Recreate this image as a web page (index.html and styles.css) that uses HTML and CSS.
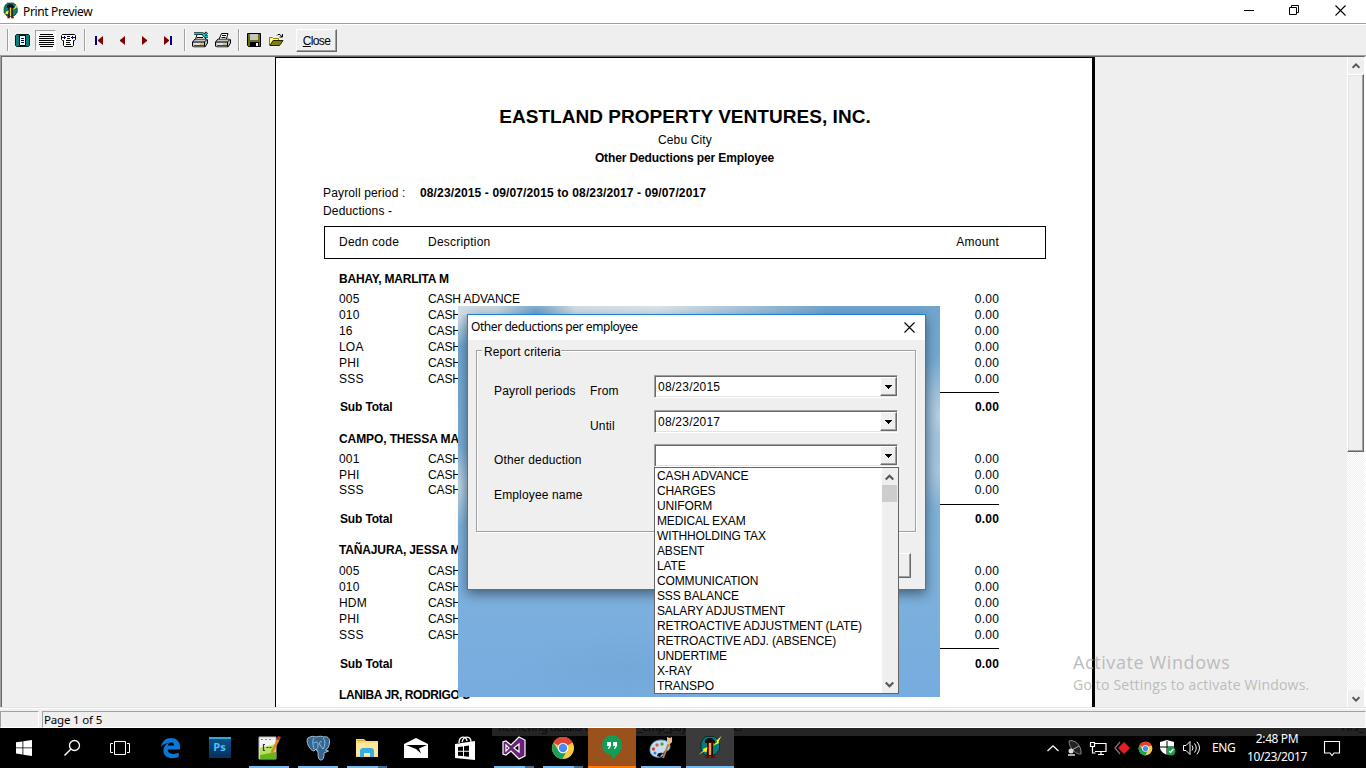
FILE: index.html
```html
<!DOCTYPE html>
<html lang="en">
<head>
<meta charset="utf-8">
<title>Print Preview</title>
<link rel="stylesheet" href="styles.css">
</head>
<body>
<svg width="0" height="0" class="defs">
  <defs>
    <symbol id="app" viewBox="0 0 24 24">
      <path d="M8 1.500h8l4 3 1.500 4v6l-3 4-3 1.500H7l-4-5V8l2-4z" fill="#087c7c" stroke="#032f2f" stroke-width="1"/>
      <path d="M7 5l3-2h4l3 3v2h-3V7h-4v1H7z" fill="#111"/>
      <path d="M9.500 7h5v13h-5z" fill="#8c1414" stroke="#2a0000" stroke-width="1"/>
      <path d="M11.200 8h1.600v12h-1.600z" fill="#e8d848"/>
      <path d="M8 20h3v3H7.500zM13 20h3l1 3h-4z" fill="#700"/>
      <path d="M23.500 1l-5 4.500.5 1.500-4.500 4 6.500-3-.5-1.500zM.5 20l5-4.500-.5-1.500 4.500-2-1 5-2.500-.5z" fill="#ff0"/>
    </symbol>
    <symbol id="chrome" viewBox="0 0 24 24">
      <circle cx="12" cy="12" r="11" fill="#fbcd3c"/>
      <path d="M12 12L2.500 6.500A11 11 0 0 1 21.500 6.500z" fill="#e04434"/>
      <path d="M12 12V7H21.800A11 11 0 0 0 2.500 6.500z" fill="#e04434"/>
      <path d="M2.500 6.500A11 11 0 0 0 11.500 23L16 14.500 12 12 7.500 14.500z" fill="#1ba15e"/>
      <circle cx="12" cy="12" r="5.300" fill="#fff"/><circle cx="12" cy="12" r="4.200" fill="#4c8bf5"/>
    </symbol>
    <symbol id="down" viewBox="0 0 7 4"><path d="M0 0h7v1H6v1H5v1H4v1H3V3H2V2H1V1H0z" fill="#000"/></symbol>
    <symbol id="chev" viewBox="0 0 8 6"><path d="M.6 4.800L4 1.400 7.400 4.800" fill="none" stroke="#555" stroke-width="1.900"/></symbol>
    <symbol id="close" viewBox="0 0 11 11"><path d="M.5.5l10 10M10.500.5l-10 10" fill="none" stroke="#000" stroke-width="1.100"/></symbol>
    <symbol id="printer-base" viewBox="0 0 16 9">
      <path d="M.5 3.500L3 .5h11.500l1 1v3L13 8.500H1.500l-1-1z" fill="#c4c4c4" stroke="#000"/>
      <path d="M1 3.500h11.500L15 1M12.500 3.500V8" fill="none" stroke="#000"/>
      <path d="M2 5.500h6" stroke="#fff"/><path d="M8 5.500h3" stroke="#d8d000"/><path d="M2 7h10" stroke="#444"/>
    </symbol>
  </defs>
</svg>

<div class="titlebar">
  <svg class="app-icon" width="17" height="17"><use href="#app"/></svg>
  <span class="window-title">Print Preview</span>
  <div class="window-buttons">
    <svg width="11" height="11"><path d="M0 5.500h10" stroke="#000"/></svg>
    <svg width="11" height="11"><path d="M.5 2.500h7v7h-7zM2.500 2.500v-2h7v7h-2" fill="none" stroke="#000"/></svg>
    <svg width="11" height="11"><use href="#close"/></svg>
  </div>
</div>

<div class="toolbar">
  <div class="tool-group pages">
    <svg width="15" height="13"><path d="M1.500 .5h12l1 1v10l-1 1h-12l-1-1v-10z" fill="#087f7f" stroke="#022"/><path d="M4.500 1.500h6v10h-6z" fill="#fff" stroke="#000"/><path d="M6 4.500h3M6 6.500h3M6 8.500h3" stroke="#000080"/></svg>
    <span class="pressed"><svg width="15" height="13"><path d="M1 .5h13M0 2.500h15M0 4.500h15M0 6.500h15M0 8.500h15M0 10.500h15M1 12.500h13" stroke="#000"/></svg></span>
    <svg width="15" height="13"><path d="M1.500 .5h12l1 1v4l-1 1h-1v5l-1 1h-8l-1-1v-5h-1l-1-1v-4z" fill="#fff" stroke="#000"/><path d="M6 2.500h3M6 4.500h3M5 6.500h5M5 8.500h4M5 10.500h5" stroke="#000"/><path d="M1 3.500h4M3.500 2v3M10 3.500h4M11.500 2v3" stroke="#000080"/></svg>
  </div>
  <div class="tool-group nav">
    <svg width="9" height="9"><path d="M0 0h2v9H0z" fill="#000080"/><path d="M8 0v9L3 5V4z" fill="#800000"/></svg>
    <svg width="6" height="9"><path d="M5 0v9L0 5V4z" fill="#800000"/></svg>
    <svg width="6" height="9"><path d="M0 0v9L5 5V4z" fill="#800000"/></svg>
    <svg width="9" height="9"><path d="M6 0h2v9H6z" fill="#000080"/><path d="M0 0v9L5 5V4z" fill="#800000"/></svg>
  </div>
  <div class="tool-group print">
    <svg width="17" height="16"><path d="M3.500 7.500l1.500-5h7l2 5z" fill="#fff" stroke="#000"/><path d="M5 5.500h6" stroke="#000"/><use href="#printer-base" y="6.500" width="16" height="9"/><path d="M2 1.500h8l3 1 2-2M11 2.500l2 2h3" fill="none" stroke="#000" stroke-width="2.600"/><path d="M2 1.500h8l3 1 2-1.500M11 2.500l2 2h3" fill="none" stroke="#12c8d0" stroke-width="1.300"/></svg>
    <svg width="17" height="15"><path d="M3.500 7.500l3-7h6.500l-2 7z" fill="#fff" stroke="#000"/><path d="M7 2.500h4M6.500 4.500h4" stroke="#000"/><use href="#printer-base" y="5.500" width="16" height="9"/></svg>
  </div>
  <div class="tool-group file">
    <svg width="14" height="14"><path d="M.5 .5h13v13h-12l-1-1z" fill="#6b6b14" stroke="#000"/><path d="M3 1h8v6H3z" fill="#c4c4c4"/><path d="M3 9h9v5H3z" fill="#000"/><path d="M9 10h2v3H9z" fill="#fff"/></svg>
    <svg width="15" height="14"><path d="M.5 12.500v-8h3l1 1h5v3" fill="#ffff80" stroke="#808000"/><path d="M1 12.500l3-5h10l-3.500 5z" fill="#808000" stroke="#222000"/><path d="M8 2.500l1-1h2l2 2.500M13.500 1v3h-3" fill="none" stroke="#000"/></svg>
  </div>
  <button class="close-button"><u>C</u>lose</button>
</div>

<main class="view">
  <div class="canvas">
    <article class="sheet">
      <h1>EASTLAND PROPERTY VENTURES, INC.</h1>
      <p class="city">Cebu City</p>
      <h2>Other Deductions per Employee</h2>
      <p class="criteria"><span class="criteria-label">Payroll period :</span><b>08/23/2015 - 09/07/2015 to 08/23/2017 - 09/07/2017</b></p>
      <p class="criteria"><span class="criteria-label">Deductions -</span></p>
      <div class="columns"><span>Dedn code</span><span>Description</span><span class="amount">Amount</span></div>

      <section class="group first">
        <h3>BAHAY, MARLITA M</h3>
        <div class="row"><span>005</span><span>CASH ADVANCE</span><span class="amount">0.00</span></div>
        <div class="row"><span>010</span><span>CASH</span><span class="amount">0.00</span></div>
        <div class="row"><span>16</span><span>CASH</span><span class="amount">0.00</span></div>
        <div class="row"><span>LOA</span><span>CASH</span><span class="amount">0.00</span></div>
        <div class="row"><span>PHI</span><span>CASH</span><span class="amount">0.00</span></div>
        <div class="row"><span>SSS</span><span>CASH</span><span class="amount">0.00</span></div>
        <div class="subtotal"><span>Sub Total</span><span class="total">0.00</span></div>
      </section>
      <section class="group second">
        <h3>CAMPO, THESSA MAR</h3>
        <div class="row"><span>001</span><span>CASH</span><span class="amount">0.00</span></div>
        <div class="row"><span>PHI</span><span>CASH</span><span class="amount">0.00</span></div>
        <div class="row last"><span>SSS</span><span>CASH</span><span class="amount">0.00</span></div>
        <div class="subtotal"><span>Sub Total</span><span class="total">0.00</span></div>
      </section>
      <section class="group third">
        <h3>TAÑAJURA, JESSA M</h3>
        <div class="row"><span>005</span><span>CASH</span><span class="amount">0.00</span></div>
        <div class="row"><span>010</span><span>CASH</span><span class="amount">0.00</span></div>
        <div class="row"><span>HDM</span><span>CASH</span><span class="amount">0.00</span></div>
        <div class="row"><span>PHI</span><span>CASH</span><span class="amount">0.00</span></div>
        <div class="row"><span>SSS</span><span>CASH</span><span class="amount">0.00</span></div>
        <div class="subtotal"><span>Sub Total</span><span class="total">0.00</span></div>
      </section>
      <section class="group fourth"><h3>LANIBA JR, RODRIGO S</h3></section>
    </article>
  </div>
  <div class="scrollbar">
    <div class="scroll-end"><svg width="8" height="6"><use href="#chev"/></svg></div>
    <div class="scroll-thumb"></div>
    <div class="scroll-track"></div>
    <div class="scroll-end"><svg class="flip" width="8" height="6"><use href="#chev"/></svg></div>
  </div>
</main>

<div class="statusbar"><div class="status-cell"></div><div class="status-cell page-count">Page 1 of 5</div></div>

<footer class="taskbar">
  <div class="band"><span class="band-text">Retrieving details on table hr_emp_payroll... Done!</span><span class="band-end">Hrs_</span></div>
  <div class="slot start"><svg width="16" height="16"><path d="M0 2.300l6.500-.9v6H0zM7.300 1.300L16 0v7.400H7.300zM0 8.200h6.500v6.200L0 13.500zM7.300 8.200H16V16l-8.700-1.300z" fill="#fff"/></svg></div>
  <div class="slot start"><svg width="18" height="18"><circle cx="11.500" cy="6.500" r="5" fill="none" stroke="#fff" stroke-width="1.300"/><path d="M8 10L1.500 16.500" stroke="#fff" stroke-width="1.500"/></svg></div>
  <div class="slot start"><svg width="20" height="16"><path d="M4.500 1.500h11v13h-11zM3 3.500H.5v9H3M17 3.500h2.500v9H17" fill="none" stroke="#fff"/></svg></div>
  <div class="slot gap-before"><svg width="21" height="22" viewBox="0 0 22 22"><path d="M1 10C2 4 6 .5 11.500.5 17 .5 21 4 21 10v2.500H8c.2 3.200 2.800 4.700 6 4.700 2.200 0 4-.5 5.600-1.400v4.400c-2 1-4.200 1.500-7 1.500-5.500 0-9-3.200-9-8 0-3.500 2-6.500 5.500-8C5 6.200 2.600 7.500 1 10zm7.200-1.500h6.600c0-2-1-3.300-3.200-3.300-1.900 0-3.100 1.300-3.400 3.300z" fill="#0a78d7"/></svg></div>
  <div class="slot"><div class="ps">Ps</div></div>
  <div class="slot open"><svg width="24" height="24"><path d="M2 1h17v22H2z" fill="#f2f2f2" stroke="#bbb"/><path d="M3 12l16-3v14H3z" fill="#62b51e"/><path d="M3 12l16-4v8L3 19z" fill="#b8e05a"/><path d="M4 3.500h2M8 3.500h2M12 3.500h2" stroke="#888"/><path d="M8 8.500H6.500v6H8M9.500 11.500h2M12.500 11.500h2" fill="none" stroke="#333" stroke-width="1.200"/><path d="M13.500 19l.5-4L20 3l2.500 1-6 12z" fill="#dc8c1e"/><path d="M20 3l1-3 3 1-1.500 3z" fill="#c33"/></svg></div>
  <div class="slot open"><svg width="24" height="24"><path d="M2 2c3-2 6-2 8-1 3-1 6-1 8 0 3-1 6 1 5.500 5 0 4-2 7-4 8l3 1-4.500 2c0 4-.5 7-3 7s-3-3-3-8l-2-3-2 2C4 15-1 5 2 2z" fill="#336791" stroke="#a9c2d8" stroke-width="1"/><path d="M8 2c-2 3-1 7 0 11M17 2c3 3 2 8 0 11M8 7c3-2 4-1 4 2 0 4-2 3-1 6M16 6c-2-1-3 0-2 3l3 4" fill="none" stroke="#a9c2d8" stroke-width=".9"/></svg></div>
  <div class="slot open stacked"><svg width="22" height="20"><path d="M0 1h8l2 2h12v16H0z" fill="#fbd978"/><path d="M1 2h7l1 1H1z" fill="#d8a23a"/><path d="M0 5h22v13H0z" fill="#ffe79c"/><path d="M4 19v-7l2-2h10l2 2v7h-4v-4H8v4z" fill="#35aee6"/></svg></div>
  <div class="slot"><svg width="24" height="20"><path d="M0 6L12 0l12 6v14H0z" fill="#fff"/><path d="M2 7h21l-8 3.500 2 5-5-4.500z" fill="#000"/></svg></div>
  <div class="slot"><svg width="22" height="24"><path d="M1 8l20-3v19L1 22z" fill="#fff"/><path d="M5 7C5 0 12-1 13 5M8 6c2-7 9-6 9 0" fill="none" stroke="#fff" stroke-width="1.300"/><path d="M4 11l5-.6v4.400H4zM10 10.200l5-.7v5.300h-5zM4 15.700h5v4.300l-5-.3zM10 15.700h5v5l-5-.5z" fill="#000"/></svg></div>
  <div class="slot open stacked"><svg width="24" height="24"><path d="M17 1l6 3v16l-6 3-8-8-5 4-3-1V6l3-1 5 4zM17 8l-5 4 5 4zM4 9v6l3-3z" fill="#68217a" fill-rule="evenodd" stroke="#fff" stroke-width="1.200"/></svg></div>
  <div class="slot open stacked"><svg width="24" height="24"><use href="#chrome"/></svg></div>
  <div class="slot alert"><svg width="22" height="24"><path d="M11 0a10 10 0 0 1 10 10c0 6-5 11-10 14v-4A10 10 0 0 1 11 0z" fill="#0f9d58"/><path d="M6 7h4v4l-2 3H7l1-3H6zM12 7h4v4l-2 3h-1l1-3h-2z" fill="#fff"/></svg></div>
  <div class="slot open"><svg width="24" height="24"><path d="M1 14C1 8 6 4 12 4s9 3 9 7c0 3-3 4-5 4-3 1-1 6-5 6-5 1-10-2-10-7z" fill="#c5dff0" stroke="#6d9cc2"/><path d="M8 20c0-3 3-4 6-3l-3 4z" fill="#08141c"/><circle cx="4.500" cy="13" r="1.700" fill="#d44332"/><circle cx="8" cy="9" r="1.700" fill="#de5943"/><circle cx="13" cy="8" r="1.700" fill="#52a043"/><circle cx="6" cy="17" r="1.500" fill="#4277c3"/><path d="M14 22l6-15" stroke="#c77824" stroke-width="2"/><path d="M18 7l0-6 3 1 2-1 0 5-3 3z" fill="#e9bd8a"/></svg></div>
  <div class="slot current"><svg width="24" height="24"><use href="#app"/></svg></div>
  <div class="tray">
    <svg width="12" height="7"><path d="M.5 6L6 .8 11.500 6" fill="none" stroke="#fff" stroke-width="1.300"/></svg>
    <svg width="17" height="17"><path d="M3 1c5-2 13 4 12 13-4 1-12-5-12-13z" fill="#222" stroke="#888"/><path d="M6 10l7-4" stroke="#aaa"/><circle cx="5" cy="11" r="2.500" fill="#ddd"/><path d="M2 15h7" stroke="#aaa" stroke-width="2"/></svg>
    <svg width="17" height="15"><path d="M5 2.500h11v8H5M8 13.500h6M11 11v2M2.500 6v6h3M.5 1.500h4v4h-4z" fill="none" stroke="#fff" stroke-width="1.200"/></svg>
    <svg width="17" height="14"><path d="M6 1L1 7l5 6" fill="none" stroke="#777" stroke-width="1.300"/><path d="M10 1l6 6-6 6-6-6z" fill="#e51e25"/></svg>
    <svg width="15" height="15"><use href="#chrome"/></svg>
    <svg width="16" height="16"><path d="M7 0l7 2v5c0 4-3 6-7 8-4-2-7-4-7-8V2z" fill="#fff"/><path d="M7 1v14M0 7h14" stroke="#000"/><circle cx="11" cy="11" r="4.500" fill="#1c9b4b"/><path d="M9 11l1.500 1.500L13.500 9" fill="none" stroke="#fff" stroke-width="1.200"/></svg>
    <svg width="17" height="14"><path d="M.5 4.500H3l4-4v13l-4-4H.5zM9 4.500q2 2.500 0 5M11.500 2.500q3.500 4.500 0 9M14 .8q5 6 0 12.500" fill="none" stroke="#fff"/></svg>
    <span class="lang">ENG</span>
    <span class="clock"><span>2:48 PM</span><span>10/23/2017</span></span>
    <svg width="16" height="17"><path d="M.5 1.500h15v11.500H10L8 15.500 6 13H.5z" fill="none" stroke="#fff" stroke-width="1.100"/></svg>
  </div>
</footer>

<div class="backdrop">
  <div class="dialog">
    <div class="dialog-title"><span class="dialog-name">Other deductions per employee</span><svg width="11" height="11"><use href="#close"/></svg></div>
    <div class="dialog-body">
      <div class="criteria-box">
        <span class="legend">Report criteria</span>
        <div class="form">
          <label>Payroll periods</label><label>From</label><div class="combo"><span>08/23/2015</span><i><svg width="7" height="4"><use href="#down"/></svg></i></div>
          <label></label><label>Until</label><div class="combo"><span>08/23/2017</span><i><svg width="7" height="4"><use href="#down"/></svg></i></div>
          <label class="wide">Other deduction</label><div class="combo"><span></span><i><svg width="7" height="4"><use href="#down"/></svg></i></div>
          <label class="wide">Employee name</label>
        </div>
      </div>
      <div class="dialog-button"></div>
    </div>
  </div>
  <div class="dropdown">
    <ul>
      <li>CASH ADVANCE</li><li>CHARGES</li><li>UNIFORM</li><li>MEDICAL EXAM</li><li>WITHHOLDING TAX</li><li>ABSENT</li><li>LATE</li><li>COMMUNICATION</li><li>SSS BALANCE</li><li>SALARY ADJUSTMENT</li><li>RETROACTIVE ADJUSTMENT (LATE)</li><li>RETROACTIVE ADJ. (ABSENCE)</li><li>UNDERTIME</li><li>X-RAY</li><li>TRANSPO</li>
    </ul>
    <div class="list-scroll"><svg width="9" height="7"><use href="#chev"/></svg><div class="list-thumb"></div><svg class="flip list-down" width="9" height="7"><use href="#chev"/></svg></div>
  </div>
</div>

<div class="watermark"><p class="wm-title">Activate Windows</p><p class="wm-text">Go to Settings to activate Windows.</p></div>
</body>
</html>
```
FILE: styles.css
```css
* { box-sizing: border-box; }
body { margin: 0; width: 1366px; height: 768px; overflow: hidden; position: relative; display: flex; flex-direction: column; background: #efefef; color: #000; font: 12px/16px "Liberation Sans", Arial, sans-serif; }
h1, h2, h3, p, ul { margin: 0; padding: 0; }
svg { display: block; flex: none; overflow: visible; }
.defs { position: absolute; }
.flip { transform: rotate(180deg); }

.titlebar { height: 24px; flex: none; background: #fff; border-bottom: 1px solid #a0a0a0; display: flex; align-items: center; padding: 0 20px 2px 2px; }
.window-title { margin-left: 4px; padding-top: 2px; font: 12px/16px "Noto Sans", sans-serif; letter-spacing: -.35px; }
.window-buttons { margin-left: auto; display: flex; gap: 35px; }
.window-buttons svg:first-child { margin-right: -1px; }

.toolbar { height: 31px; flex: none; border-top: 1px solid #fff; display: flex; align-items: center; padding-left: 7px; }
.tool-group { height: 22px; display: flex; align-items: center; border-left: 1px solid #a0a0a0; box-shadow: inset 1px 0 #fff; flex: none; }
.pages { width: 77px; padding-left: 7px; gap: 5px; }
.pressed { width: 21px; height: 21px; display: flex; align-items: center; justify-content: center; padding-left: 2px; background: #f8f8f8; border: 1px solid #a0a0a0; border-right-color: #fff; border-bottom-color: #fff; }
.nav { width: 100px; padding-left: 10px; gap: 16px; }
.print { width: 54px; padding-left: 7px; gap: 6px; }
.file { width: 54px; padding-left: 8px; gap: 8px; }
.close-button { margin-left: 4px; border-radius: 0; width: 41px; height: 23px; padding: 1px 0 0; background: #efefef; border: 1px solid #fff; border-right-color: #696969; border-bottom-color: #696969; box-shadow: inset -1px -1px #a0a0a0; font: 12px/16px "Liberation Sans", Arial, sans-serif; letter-spacing: -.65px; }

.view { height: 652px; flex: none; border-top: 1px solid #a0a0a0; border-left: 1px solid #a0a0a0; display: flex; }
.canvas { flex: 1; border-top: 1px solid #696969; border-left: 1px solid #696969; overflow: hidden; padding-left: 273px; }
.sheet { width: 820px; height: 651px; background: #fff; border: 1px solid #000; border-right-width: 3px; border-bottom: 0; padding: 47px 0 0 47px; }
h1 { width: 724px; text-align: center; font-size: 19px; line-height: 24px; letter-spacing: .04px; }
.city { width: 724px; text-align: center; line-height: 18px; padding-top: 2px; height: 20px; letter-spacing: .15px; }
h2 { width: 723px; text-align: center; font-size: 12px; line-height: 18px; height: 35px; letter-spacing: -.12px; }
.criteria { display: flex; line-height: 18px; height: 18px; }
.criteria-label { width: 97px; letter-spacing: .15px; }
.criteria b { letter-spacing: .13px; }
.columns { width: 722px; height: 33px; border: 1px solid #000; margin: 6px 0 8px 1px; padding-left: 14px; display: grid; grid-template-columns: 89px 500px 71px; align-items: center; padding-bottom: 2px; letter-spacing: .22px; }
.amount, .total { text-align: right; }
.group { width: 676px; padding-left: 16px; }
h3 { font-size: 12px; line-height: 24px; height: 24px; white-space: nowrap; letter-spacing: -.2px; }
.second h3 { letter-spacing: -.1px; }
.fourth h3 { letter-spacing: -.4px; }
.row { display: grid; grid-template-columns: 89px 500px 71px; height: 16px; letter-spacing: -.1px; }
.row span:first-child { letter-spacing: .2px; }
.row .amount { letter-spacing: .2px; }
.subtotal { height: 40px; display: flex; justify-content: space-between; padding: 5px 0 0 1px; font-weight: bold; line-height: 31px; letter-spacing: -.15px; }
.total { width: 60px; border-top: 1px solid #000; line-height: 29px; letter-spacing: .15px; }
.second .row.last { height: 15px; line-height: 15px; }
.second .subtotal { padding-top: 6px; }
.third h3 { height: 25px; letter-spacing: -.15px; }
.third .subtotal { line-height: 33px; }
.third .total { line-height: 31px; }

.scrollbar { width: 19px; border-top: 1px solid #696969; border-right: 2px solid #fff; display: flex; flex-direction: column; }
.scroll-end { height: 17px; flex: none; border-left: 1px solid #fff; display: flex; align-items: center; justify-content: center; }
.scroll-thumb { height: 378px; border: 1px solid #fff; border-right-color: #696969; border-bottom-color: #696969; box-shadow: inset -1px -1px #a0a0a0, inset 1px 1px #e3e3e3; }
.scroll-track { flex: 1; background: repeating-conic-gradient(#fff 0 25%, #efefef 0 50%) 0 0 / 2px 2px; }

.statusbar { height: 21px; flex: none; border-top: 1px solid #e3e3e3; box-shadow: inset 0 1px #fff; display: flex; gap: 3px; padding: 3px 0 0; }
.status-cell { width: 39px; border: 1px solid #a0a0a0; border-right-color: #fff; border-bottom-color: #fff; }
.page-count { flex: 1; padding-left: 1px; font: 11.500px/15px "Noto Sans", sans-serif; letter-spacing: -.18px; }

.taskbar { height: 40px; flex: none; background: #000; color: #fff; display: flex; position: relative; }
.band { position: absolute; left: 492px; right: 0; top: 0; height: 8px; background: #242424; overflow: hidden; color: #090909; display: flex; justify-content: space-between; padding: 0 3px 0 6px; font: 11px/14px "Noto Sans", sans-serif; letter-spacing: -.3px; }
.band span { margin-top: -8px; white-space: nowrap; }
.slot { width: 49px; flex: none; display: flex; align-items: center; justify-content: center; position: relative; }
.start { width: 48px; }
.gap-before { margin-left: 2px; }
.open::after { content: ""; position: absolute; left: 5px; width: 40px; bottom: 0; height: 2px; background: #76b9ed; }
.stacked::after { background: linear-gradient(90deg, #76b9ed 31px, #426e91 31px); }
.alert { background: #9b511c; border-bottom: 2px solid #ff7800; margin: 0 0 0 1px; width: 48px; }
.current { background: #3b3b3d; border-bottom: 2px solid #76b9ed; width: 48px; margin-left: 1px; }
.ps { width: 22px; height: 21px; margin-bottom: 2px; background: linear-gradient(#0c5288, #08305c); border-top: 2px solid #31a8d8; color: #4dc3f2; font: bold 11px/16px "Open Sans", sans-serif; text-align: center; }
.tray { margin-left: auto; display: flex; align-items: center; padding-right: 25px; gap: 7px; font: 12px/18px "Noto Sans", sans-serif; letter-spacing: -.4px; position: relative; left: -1px; }
.tray svg:first-child { margin-right: 0; }
.lang { margin-left: 5px; width: 24px; }
.clock { width: 70px; display: flex; flex-direction: column; text-align: center; margin: 0 5px 0 -1px; white-space: nowrap; }

.backdrop { position: absolute; left: 458px; top: 306px; width: 482px; height: 391px; background:
  radial-gradient(ellipse 40px 25px at 78px 6px, #6fa3cc, transparent),
  radial-gradient(ellipse 26px 30px at 0 10px, #d5e0e8, transparent),
  linear-gradient(90deg, #c3d3de, #dbe3e8 200px, transparent 370px) 0 0 / 100% 9px no-repeat,
  radial-gradient(ellipse 20px 40px at 0 180px, #c0d4e4, transparent),
  radial-gradient(ellipse 26px 60px at 482px 110px, #b8cfe0, transparent),
  radial-gradient(ellipse 26px 40px at 482px 165px, #aac8de, transparent),
  radial-gradient(ellipse 120px 40px at 170px 365px, #73a9d9, transparent),
  linear-gradient(#70a5cf, #7fb1da 60%, #77ace0); }
.dialog { position: absolute; left: 9px; top: 8px; width: 459px; height: 276px; border: 1px solid #1883d7; background: #efefef; box-shadow: 0 4px 11px rgba(0, 0, 0, .45); }
.dialog-title { height: 25px; background: #fff; display: flex; align-items: center; justify-content: space-between; padding: 0 10px 1px 3px; font: 12px/16px "Noto Sans", sans-serif; }
.dialog-name { letter-spacing: -.43px; }
.dialog-body { padding: 10px 9px 0 8px; }
.criteria-box { width: 440px; height: 182px; border: 1px solid #a0a0a0; box-shadow: 1px 1px #fff, inset 1px 1px #fff; padding-left: 5px; }
.legend { display: block; width: 79px; height: 14px; margin-top: -8px; padding-left: 2px; background: #efefef; letter-spacing: .1px; line-height: 18px; white-space: nowrap; }
.form { display: grid; grid-template-columns: 96px 64px 244px; grid-template-rows: 35px 34px 35px 30px; padding: 18px 0 0 12px; letter-spacing: .15px; }
.form label { padding-top: 8px; }
.form .wide { grid-column: 1 / 3; }
.combo { height: 23px; background: #fff; border: 1px solid #a0a0a0; border-right-color: #fff; border-bottom-color: #fff; box-shadow: inset 1px 1px #696969, inset -1px -1px #e3e3e3; display: flex; justify-content: space-between; padding: 1px 0 1px 3px; line-height: 21px; letter-spacing: .22px; }
.combo i { width: 17px; height: 19px; background: #efefef; border: 1px solid #fff; border-right-color: #696969; border-bottom-color: #696969; box-shadow: inset -1px -1px #a0a0a0; display: flex; align-items: center; justify-content: center; }
.dialog-button { width: 75px; height: 25px; margin: 21px 5px 0 auto; border: 1px solid #fff; border-right-color: #696969; border-bottom-color: #696969; box-shadow: inset -1px -1px #a0a0a0; }
.dropdown { position: absolute; left: 196px; top: 161px; width: 245px; height: 227px; background: #fff; border: 1px solid #646464; display: flex; justify-content: space-between; padding-left: 2px; }
.dropdown ul { list-style: none; line-height: 15px; padding-top: 1px; letter-spacing: -.14px; }
.dropdown li { height: 15px; white-space: nowrap; }
.list-scroll { width: 16px; background: #efefef; display: flex; flex-direction: column; align-items: center; padding: 6px 1px 5px 0; }
.list-thumb { width: 15px; height: 17px; background: #cdcdcd; margin-top: 4px; }
.list-down { margin-top: auto; }

.watermark { position: absolute; left: 1073px; top: 650px; color: #bcbcbc; white-space: nowrap; font-family: "Open Sans", sans-serif; }
.wm-title { font-size: 18px; line-height: 25px; letter-spacing: .6px; }
.wm-text { font-size: 14px; line-height: 20px; letter-spacing: .2px; }
```
